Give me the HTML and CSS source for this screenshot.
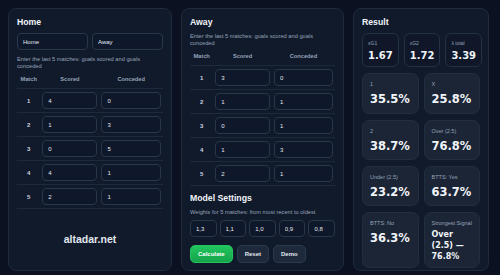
FILE: index.html
```html
<!DOCTYPE html>
<html lang="en">
<head>
    <meta charset="UTF-8">
    <meta name="viewport" content="width=device-width, initial-scale=1.0">
    <title>Match Predictor</title>
    <link rel="stylesheet" href="styles.css">
</head>
<body>
    <div class="layout">
        <!-- Home team -->
        <div class="panel">
            <h2>Home</h2>
            <div class="team-names">
                <input type="text" value="Home">
                <input type="text" value="Away">
            </div>
            <p class="hint">Enter the last 5 matches: goals scored and goals conceded</p>
            <table class="matches">
                <thead>
                    <tr><th class="col-match">Match</th><th class="col-scored">Scored</th><th>Conceded</th></tr>
                </thead>
                <tbody>
                    <tr><td>1</td><td><input type="text" value="4"></td><td><input type="text" value="0"></td></tr>
                    <tr><td>2</td><td><input type="text" value="1"></td><td><input type="text" value="3"></td></tr>
                    <tr><td>3</td><td><input type="text" value="0"></td><td><input type="text" value="5"></td></tr>
                    <tr><td>4</td><td><input type="text" value="4"></td><td><input type="text" value="1"></td></tr>
                    <tr><td>5</td><td><input type="text" value="2"></td><td><input type="text" value="1"></td></tr>
                </tbody>
            </table>
            <div class="brand">altadar.net</div>
        </div>

        <!-- Away team + settings -->
        <div class="panel">
            <h2>Away</h2>
            <p class="hint">Enter the last 5 matches: goals scored and goals conceded</p>
            <table class="matches">
                <thead>
                    <tr><th class="col-match">Match</th><th class="col-scored">Scored</th><th>Conceded</th></tr>
                </thead>
                <tbody>
                    <tr><td>1</td><td><input type="text" value="3"></td><td><input type="text" value="0"></td></tr>
                    <tr><td>2</td><td><input type="text" value="1"></td><td><input type="text" value="1"></td></tr>
                    <tr><td>3</td><td><input type="text" value="0"></td><td><input type="text" value="1"></td></tr>
                    <tr><td>4</td><td><input type="text" value="1"></td><td><input type="text" value="3"></td></tr>
                    <tr><td>5</td><td><input type="text" value="2"></td><td><input type="text" value="1"></td></tr>
                </tbody>
            </table>

            <h2 class="settings-title">Model Settings</h2>
            <p class="hint">Weights for 5 matches: from most recent to oldest</p>
            <div class="weights">
                <input type="text" value="1,3">
                <input type="text" value="1,1">
                <input type="text" value="1,0">
                <input type="text" value="0,9">
                <input type="text" value="0,8">
            </div>
            <div class="actions">
                <button class="btn btn-primary">Calculate</button>
                <button class="btn">Reset</button>
                <button class="btn">Demo</button>
            </div>
        </div>

        <!-- Results -->
        <div class="panel">
            <h2>Result</h2>
            <div class="xg-row">
                <div class="xg-card"><span class="label">xG1</span><span class="xg-value">1.67</span></div>
                <div class="xg-card"><span class="label">xG2</span><span class="xg-value">1.72</span></div>
                <div class="xg-card"><span class="label">λ total</span><span class="xg-value">3.39</span></div>
            </div>
            <div class="prob-grid">
                <div class="prob-card"><span class="label">1</span><span class="prob-value">35.5%</span></div>
                <div class="prob-card"><span class="label">X</span><span class="prob-value">25.8%</span></div>
                <div class="prob-card"><span class="label">2</span><span class="prob-value">38.7%</span></div>
                <div class="prob-card"><span class="label">Over (2.5)</span><span class="prob-value">76.8%</span></div>
                <div class="prob-card"><span class="label">Under (2.5)</span><span class="prob-value">23.2%</span></div>
                <div class="prob-card"><span class="label">BTTS: Yes</span><span class="prob-value">63.7%</span></div>
                <div class="prob-card"><span class="label">BTTS: No</span><span class="prob-value">36.3%</span></div>
                <div class="prob-card"><span class="label">Strongest Signal</span><span class="signal-value">Over (2.5) — 76.8%</span></div>
            </div>
        </div>
    </div>
</body>
</html>
```

FILE: styles.css
```css
* {
    box-sizing: border-box;
}

body {
    margin: 0;
    background-color: #0b1120;
    color: #e2e8f0;
    font-family: "Liberation Sans", Arial, sans-serif;
}

.layout {
    display: grid;
    grid-template-columns: 164px 163px 136px;
    gap: 9px;
    padding: 8px;
}

.panel {
    height: 263px;
    background-color: #111a2b;
    border: 1px solid #1f2a3c;
    border-radius: 8px;
    padding: 8px;
}

.panel h2 {
    margin: 0 0 5px;
    font-size: 8.7px;
    line-height: 11px;
    color: #f1f5f9;
}

input {
    display: block;
    width: 100%;
    height: 17px;
    padding: 0 5px;
    background-color: #0f172a;
    border: 1px solid #2a3649;
    border-radius: 4px;
    color: #e2e8f0;
    font-family: inherit;
    font-size: 6px;
}

.team-names {
    display: grid;
    grid-template-columns: 1fr 1fr;
    gap: 4px;
}

.hint {
    margin: 4px 0 0;
    font-size: 5.7px;
    line-height: 7px;
    color: #94a3b8;
}

.team-names + .hint {
    margin-top: 6px;
}

.matches {
    width: 100%;
    border-collapse: collapse;
    table-layout: fixed;
}

.matches th {
    padding: 6px 2px 5px;
    font-size: 5.7px;
    line-height: 7px;
    font-weight: bold;
    color: #94a3b8;
    text-align: center;
    border-bottom: 1px solid #1e293b;
}

.matches .col-match {
    width: 16%;
}

.matches .col-scored {
    width: 40.5%;
}

.matches td {
    padding: 3px 2px;
    font-size: 6px;
    font-weight: bold;
    color: #cbd5e1;
    text-align: center;
    border-bottom: 1px solid #1e293b;
}

.brand {
    margin-top: 24px;
    text-align: center;
    font-size: 10.5px;
    line-height: 12px;
    font-weight: bold;
    color: #e2e8f0;
}

.panel .settings-title {
    margin: 7px 0 5px;
}

.weights {
    display: grid;
    grid-template-columns: repeat(5, 1fr);
    gap: 3px;
    margin-top: 4px;
}

.actions {
    display: flex;
    gap: 4px;
    margin-top: 8px;
}

.btn {
    height: 18px;
    padding: 0 7px;
    background-color: #1e293b;
    border: 1px solid #2c3a50;
    border-radius: 5px;
    color: #e2e8f0;
    font-family: inherit;
    font-size: 6px;
    font-weight: bold;
    cursor: pointer;
}

.btn-primary {
    background: linear-gradient(180deg, #22c55e, #16a34a);
    border-color: #22c55e;
    color: white;
}

.xg-row {
    display: grid;
    grid-template-columns: repeat(3, 1fr);
    gap: 5px;
}

.xg-card {
    height: 34px;
    padding: 6px 5px;
    background-color: #0f1729;
    border: 1px solid #243044;
    border-radius: 6px;
}

.label {
    display: block;
    font-size: 5px;
    line-height: 6px;
    color: #94a3b8;
}

.xg-value {
    display: block;
    margin-top: 4px;
    font-family: "DejaVu Sans", sans-serif;
    font-size: 10px;
    font-weight: bold;
    color: #f1f5f9;
}

.prob-grid {
    display: grid;
    grid-template-columns: 1fr 1fr;
    grid-template-rows: 41px 40px 40px 56px;
    gap: 6px 5px;
    margin-top: 6px;
}

.prob-card {
    padding: 7px;
    background-color: #1c2536;
    border: 1px solid #222d40;
    border-radius: 7px;
}

.prob-card .label {
    font-size: 5.5px;
}

.prob-value {
    display: block;
    margin-top: 5px;
    font-family: "DejaVu Sans", sans-serif;
    font-size: 11.5px;
    font-weight: bold;
    color: #f1f5f9;
}

.signal-value {
    display: block;
    margin-top: 3px;
    font-family: "DejaVu Sans", sans-serif;
    font-size: 8px;
    line-height: 11px;
    font-weight: bold;
    color: #f1f5f9;
}
```
